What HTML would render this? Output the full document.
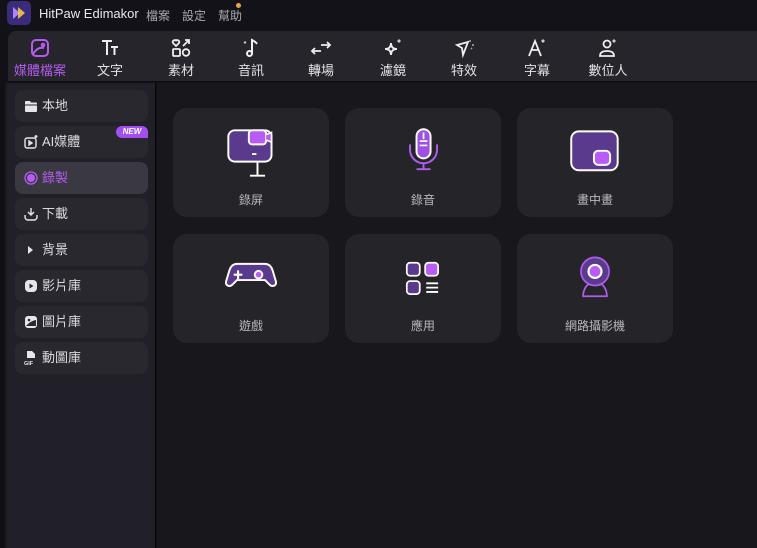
<!DOCTYPE html>
<html><head><meta charset="utf-8"><style>
*{margin:0;padding:0;box-sizing:border-box}
body{width:757px;height:548px;overflow:hidden;background:#121116;font-family:"Liberation Sans","Noto Sans CJK TC",sans-serif;position:relative;color:#ddd}
.abs{position:absolute}
.title{left:0;top:0;width:757px;height:31px;background:#131218}
.logo{left:7px;top:1px;width:24px;height:24px;border-radius:5px;background:#3a2c7a}
.tb{left:8px;top:31px;width:749px;height:51px;background:#26252b;border-radius:8px 0 0 0;border-bottom:1px solid #0e0e12}
.tool{position:absolute;top:0;width:70px;text-align:center;font-size:13px;color:#e2e2e6}
.tool svg{display:block;margin:6px auto 0;width:22px;height:22px}
.tool span{display:block;margin-top:1px}
.side{left:7px;top:83px;width:149px;height:465px;background:#212029;border-right:1px solid #050507}
.sidel{left:0;top:83px;width:7px;height:465px;background:#111014;border-right:2px solid #1b1a20}
.main{left:157px;top:83px;width:600px;height:465px;background:#18181c}
.it{position:absolute;left:15px;width:133px;height:32px;border-radius:8px;background:#29282f;font-size:13px;color:#dcdce0;line-height:32px;padding-left:27px}
.it .ic{position:absolute;left:9px;top:9px;width:14px;height:14px}
.card{position:absolute;width:156px;height:109px;border-radius:14px;background:#252429;text-align:center;font-size:12px;color:#b8b8be}
.card svg{position:absolute;left:51px;top:18px;width:54px;height:54px}
.card span{position:absolute;left:0;right:0;top:83px}
</style></head><body>
<div class="abs title"></div>
<div class="abs logo"><svg width="24" height="24" viewBox="0 0 24 24"><path d="M6 6l7 6-7 6z" fill="#b084ff"/><path d="M11 6l7 6-7 6z" fill="#f2c84b" opacity=".9"/></svg></div>
<div class="abs" style="left:39px;top:6px;font-size:13px;color:#e8e8ee">HitPaw Edimakor</div>
<div class="abs" style="left:146px;top:7px;font-size:12px;color:#a8a8b0">檔案</div>
<div class="abs" style="left:182px;top:7px;font-size:12px;color:#a8a8b0">設定</div>
<div class="abs" style="left:218px;top:7px;font-size:12px;color:#a8a8b0">幫助</div>
<div class="abs" style="left:236px;top:3px;width:5px;height:5px;border-radius:50%;background:#e8a44a"></div>

<div class="abs tb">
<div class="tool" style="left:-3px;color:#b45cf0"><svg viewBox="0 0 22 22" fill="none" stroke="#b45cf0" stroke-width="2"><rect x="3" y="3" width="16" height="16" rx="4"/><path d="M4 17c3-5 7-7 11-6"/><circle cx="14" cy="8" r="1.3"/></svg><span>媒體檔案</span></div>
<div class="tool" style="left:67px"><svg viewBox="0 0 22 22" fill="none" stroke="#eee" stroke-width="2"><path d="M3 4h10M8 4v14M12 10h7M15.5 10v8"/></svg><span>文字</span></div>
<div class="tool" style="left:138px"><svg viewBox="0 0 22 22" fill="none" stroke="#eee" stroke-width="1.8"><path d="M6 9L3 6a2 2 0 013-2.5A2 2 0 019 6z"/><path d="M13 9l6-6M15 3h4v4"/><rect x="3" y="12" width="7" height="7" rx="1"/><circle cx="16" cy="15.5" r="3.3"/></svg><span>素材</span></div>
<div class="tool" style="left:208px"><svg viewBox="0 0 22 22" fill="none" stroke="#eee" stroke-width="2"><path d="M12 17V3c2 1 4 2 5 4"/><circle cx="9.5" cy="16.5" r="2.5"/><path d="M5 4l1.5 1.5L5 7 3.5 5.5z" fill="#ccc" stroke="none"/></svg><span>音訊</span></div>
<div class="tool" style="left:278px"><svg viewBox="0 0 22 22" fill="none" stroke="#eee" stroke-width="1.8"><path d="M11 8h9M17 5l3 3-3 3M11 14H2M5 11l-3 3 3 3"/></svg><span>轉場</span></div>
<div class="tool" style="left:350px"><svg viewBox="0 0 22 22" fill="none" stroke="#eee" stroke-width="1.8"><path d="M9 6c0 4 2 6 6 6-4 0-6 2-6 6 0-4-2-6-6-6 4 0 6-2 6-6z"/><path d="M17 2l2 2-2 2-2-2z" fill="#ccc" stroke="none"/></svg><span>濾鏡</span></div>
<div class="tool" style="left:421px"><svg viewBox="0 0 22 22" fill="none" stroke="#eee" stroke-width="1.8"><path d="M4 8l11-3-5 13-1-7z"/><path d="M17 3v2M19 8h2M18 11l1 1" stroke="#999"/></svg><span>特效</span></div>
<div class="tool" style="left:494px"><svg viewBox="0 0 22 22" fill="none" stroke="#eee" stroke-width="1.8"><path d="M3 19l6-15 6 15M5.5 13h7"/><path d="M17 2l2 2-2 2-2-2z" fill="#ccc" stroke="none"/></svg><span>字幕</span></div>
<div class="tool" style="left:565px"><svg viewBox="0 0 22 22" fill="none" stroke="#eee" stroke-width="1.8"><circle cx="10" cy="7" r="3.5"/><path d="M3 19c0-4 3-5 7-5s7 1 7 5z"/><path d="M17 2l2 2-2 2-2-2z" fill="#ccc" stroke="none"/></svg><span>數位人</span></div>
</div>

<div class="abs sidel"></div>
<div class="abs side"></div>
<div class="abs main"></div>

<div class="it" style="top:90px"><svg class="ic" viewBox="0 0 14 14"><path d="M1 3a1 1 0 011-1h4l1 1.5h5a1 1 0 011 1V12a1 1 0 01-1 1H2a1 1 0 01-1-1z" fill="#e6e6ea"/><path d="M1 6h12" stroke="#29282f"/></svg>本地</div>
<div class="it" style="top:126px"><svg class="ic" viewBox="0 0 14 14" fill="none" stroke="#e6e6ea" stroke-width="1.4"><rect x="1" y="3" width="11" height="10" rx="2"/><path d="M5 6l3 2-3 2z" fill="#e6e6ea"/><path d="M12 0v3M10.5 1.5h3"/></svg>AI媒體
<div style="position:absolute;right:0;top:0;width:32px;height:12px;background:#a24ef0;border-radius:6px 6px 0 6px;font-size:8px;font-weight:bold;font-style:italic;line-height:12px;text-align:center;color:#fff;padding:0">NEW</div></div>
<div class="it" style="top:162px;background:#3a3941;color:#b65cf2"><svg class="ic" viewBox="0 0 14 14"><circle cx="7" cy="7" r="6" fill="none" stroke="#b65cf2" stroke-width="1.3"/><circle cx="7" cy="7" r="4" fill="#b65cf2"/></svg>錄製</div>
<div class="it" style="top:198px"><svg class="ic" viewBox="0 0 14 14" fill="none" stroke="#e6e6ea" stroke-width="1.4"><path d="M7 1v7M4 5l3 3 3-3M1 8v2a3 3 0 003 3h6a3 3 0 003-3V8"/></svg>下載</div>
<div class="it" style="top:234px"><svg class="ic" viewBox="0 0 14 14"><path d="M4 3l5 4-5 4z" fill="#e6e6ea"/></svg>背景</div>
<div class="it" style="top:270px"><svg class="ic" viewBox="0 0 14 14"><rect x="1" y="1" width="12" height="12" rx="4" fill="#e6e6ea"/><path d="M5.5 4.5l4 2.5-4 2.5z" fill="#29282f"/></svg>影片庫</div>
<div class="it" style="top:306px"><svg class="ic" viewBox="0 0 14 14"><rect x="1" y="1" width="12" height="12" rx="3" fill="#e6e6ea"/><path d="M2 11c3-3 5-5 10-6v6H2z" fill="#29282f"/><circle cx="5" cy="5" r="1.3" fill="#29282f"/></svg>圖片庫</div>
<div class="it" style="top:342px"><svg class="ic" viewBox="0 0 14 14"><path d="M3 0h5l3 3v4H3z" fill="#e6e6ea"/><text x="0" y="14" font-size="5.5" font-weight="bold" fill="#e6e6ea" font-family="Liberation Sans">GIF</text></svg>動圖庫</div>

<div class="card" style="left:173px;top:108px"><svg viewBox="0 0 50 50"><rect x="4" y="4" width="40" height="29" rx="6" fill="#5a3a8c" stroke="#fff" stroke-width="1.8"/><path d="M24 46h14M31 33v13M26 26h4" stroke="#fff" stroke-width="1.8"/><rect x="23" y="4" width="16" height="13" rx="3" fill="#b85cf5" stroke="#fff" stroke-width="1.8"/><path d="M39 8l5-2v9l-5-2" fill="#b85cf5" stroke="#fff" stroke-width="1.5"/></svg><span>錄屏</span></div>
<div class="card" style="left:345px;top:108px"><svg viewBox="0 0 50 50"><rect x="19" y="3" width="13" height="27" rx="6.5" fill="#a050e0" stroke="#fff" stroke-width="1.8"/><path d="M25.5 6v6M22 14h7M22 18h7" stroke="#fff" stroke-width="1.6"/><path d="M13 17v5a12.5 12.5 0 0025 0v-5M25.5 35v5M19 40h13" fill="none" stroke="#b05cf0" stroke-width="1.8"/></svg><span>錄音</span></div>
<div class="card" style="left:517px;top:108px"><svg viewBox="0 0 50 50"><rect x="3" y="5" width="43" height="36" rx="7" fill="#5a3a8c" stroke="#fff" stroke-width="1.8"/><rect x="24" y="23" width="15" height="13" rx="4" fill="#b85cf5" stroke="#fff" stroke-width="1.8"/></svg><span>畫中畫</span></div>
<div class="card" style="left:173px;top:234px"><svg viewBox="0 0 50 50"><path d="M12 11h26c4 0 6 3 7 6l3 10c1 4-3 6-6 3l-4-4H12l-4 4c-3 3-7 1-6-3l3-10c1-3 3-6 7-6z" fill="#5a3a8c" stroke="#fff" stroke-width="1.8"/><path d="M13 17v8M9 21h8" stroke="#fff" stroke-width="2"/><circle cx="32" cy="21" r="3.5" fill="#b85cf5" stroke="#fff" stroke-width="1.8"/></svg><span>遊戲</span></div>
<div class="card" style="left:345px;top:234px"><svg viewBox="0 0 50 50"><rect x="10" y="10" width="12" height="12" rx="3" fill="#5a3a8c" stroke="#fff" stroke-width="1.6"/><rect x="27" y="10" width="12" height="12" rx="3" fill="#b85cf5" stroke="#fff" stroke-width="1.6"/><rect x="10" y="27" width="12" height="12" rx="3" fill="#5a3a8c" stroke="#fff" stroke-width="1.6"/><path d="M28 29h11M28 33h11M28 37h11" stroke="#fff" stroke-width="1.7"/></svg><span>應用</span></div>
<div class="card" style="left:517px;top:234px"><svg viewBox="0 0 50 50"><path d="M14 41c0-6 3-10 5-11h12c2 1 5 5 5 11z" fill="none" stroke="#b05cf0" stroke-width="1.6"/><circle cx="25" cy="18" r="13" fill="#5a3a8c" stroke="#b05cf0" stroke-width="1.6"/><circle cx="25" cy="18" r="6" fill="#b85cf5" stroke="#fff" stroke-width="2"/></svg><span>網路攝影機</span></div>
</body></html>
